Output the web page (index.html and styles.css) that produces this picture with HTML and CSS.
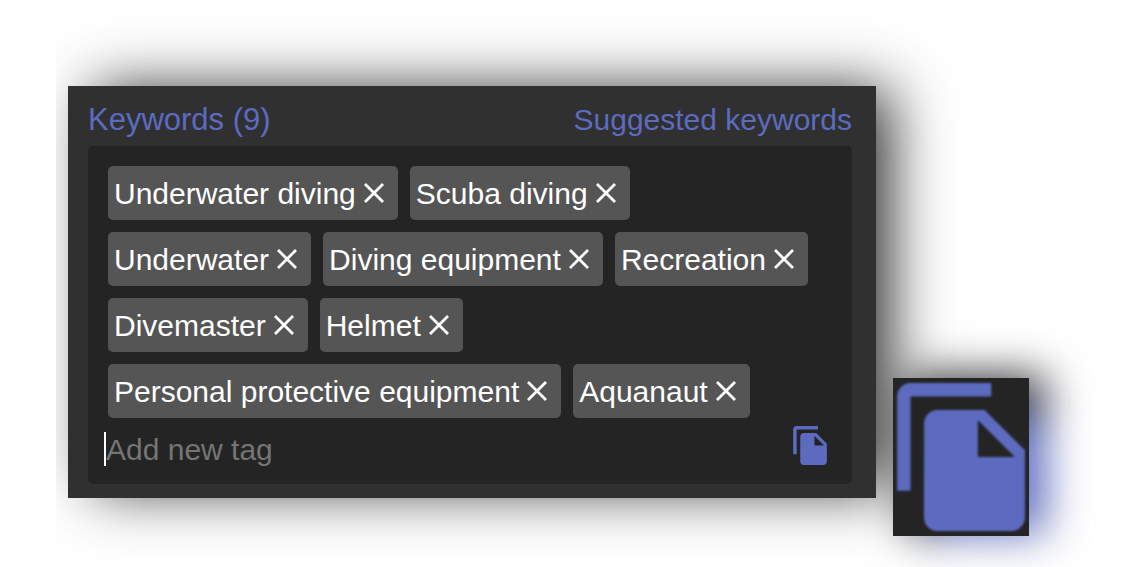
FILE: index.html
```html
<!DOCTYPE html>
<html lang="en">
<head>
<meta charset="utf-8">
<meta name="viewport" content="width=device-width, initial-scale=1">
<title>Keywords</title>
<link rel="stylesheet" href="styles.css">
</head>
<body>
<svg class="defs" aria-hidden="true">
  <symbol id="cross" viewBox="0 0 20 20"><path d="M1 1L19 19M19 1L1 19" fill="none" stroke="currentColor" stroke-width="2.8"/></symbol>
  <symbol id="copy" viewBox="2 1 19 22"><path fill="currentColor" d="M16 1H4c-1.1 0-2 .9-2 2v14h2V3h12V1zm-1 4l6 6v10c0 1.1-.9 2-2 2H7.99C6.89 23 6 22.1 6 21l.01-14c0-1.1.89-2 1.99-2h7zm-1 7h5.5L14 6.5V12z"/></symbol>
</svg>
<main class="stage">
  <section class="panel">
    <header class="panel-header">
      <label class="title" for="new-tag">Keywords (9)</label>
      <a class="suggested" href="#">Suggested keywords</a>
    </header>
    <div class="box">
      <ul class="tags">
        <li class="tag">Underwater diving<button class="remove" type="button" aria-label="Remove Underwater diving"><svg class="cross"><use href="#cross"/></svg></button></li>
        <li class="tag">Scuba diving<button class="remove" type="button" aria-label="Remove Scuba diving"><svg class="cross"><use href="#cross"/></svg></button></li>
        <li class="tag">Underwater<button class="remove" type="button" aria-label="Remove Underwater"><svg class="cross"><use href="#cross"/></svg></button></li>
        <li class="tag">Diving equipment<button class="remove" type="button" aria-label="Remove Diving equipment"><svg class="cross"><use href="#cross"/></svg></button></li>
        <li class="tag">Recreation<button class="remove" type="button" aria-label="Remove Recreation"><svg class="cross"><use href="#cross"/></svg></button></li>
        <li class="tag">Divemaster<button class="remove" type="button" aria-label="Remove Divemaster"><svg class="cross"><use href="#cross"/></svg></button></li>
        <li class="tag">Helmet<button class="remove" type="button" aria-label="Remove Helmet"><svg class="cross"><use href="#cross"/></svg></button></li>
        <li class="tag">Personal protective equipment<button class="remove" type="button" aria-label="Remove Personal protective equipment"><svg class="cross"><use href="#cross"/></svg></button></li>
        <li class="tag">Aquanaut<button class="remove" type="button" aria-label="Remove Aquanaut"><svg class="cross"><use href="#cross"/></svg></button></li>
      </ul>
      <div class="entry">
        <input class="new-tag" id="new-tag" type="text" placeholder="Add new tag">
        <button class="copy" type="button" aria-label="Copy keywords"><svg class="copy-icon"><use href="#copy"/></svg></button>
      </div>
    </div>
  </section>
  <div class="card">
    <svg class="card-icon" role="img" aria-label="Copy"><use href="#copy"/></svg>
  </div>
</main>
</body>
</html>
```

FILE: styles.css
```css
* {
  box-sizing: border-box;
}

body {
  margin: 0;
  background: #fff;
  color: #fff;
  font-family: "Liberation Sans", Arial, sans-serif;
  font-size: 30px;
  line-height: 34px;
}

button {
  padding: 0;
  border: 0;
  background: none;
  color: inherit;
  cursor: pointer;
}

svg {
  display: block;
}

.defs {
  position: absolute;
  width: 0;
  height: 0;
}

.stage {
  display: flex;
  align-items: flex-start;
  gap: 17px;
  padding: 86px 105px 31px 68px;
  overflow: hidden;
  isolation: isolate;
}

.panel {
  flex: 1;
  min-width: 0;
  padding: 17px 24px 14px 20px;
  background: #303030;
  box-shadow: 20px -3px 56px -6px rgba(0, 0, 0, 0.82);
  clip-path: inset(-86px -100px -80px -12px);
}

.panel-header {
  display: flex;
  justify-content: space-between;
  padding-bottom: 9px;
  color: #5c6bc0;
}

.title {
  font-size: 31px;
}

.suggested {
  color: inherit;
  text-decoration: none;
}

.box {
  padding: 20px 20px 18px;
  border-radius: 5px;
  background: #242424;
}

.tags {
  display: flex;
  flex-wrap: wrap;
  gap: 12px;
  margin: 0;
  padding: 0;
  list-style: none;
}

.tag {
  display: flex;
  align-items: center;
  gap: 8px;
  height: 54px;
  padding: 1px 14px 0 6px;
  border-radius: 5px;
  background: #555;
}

.remove {
  padding-bottom: 1px;
}

.cross {
  width: 20px;
  height: 20px;
}

.entry {
  display: flex;
  align-items: flex-end;
  justify-content: space-between;
  margin: 8px 5px 0 -4px;
}

.new-tag {
  flex: 1;
  min-width: 0;
  height: 34px;
  padding: 1px 0 0;
  border: 0;
  border-left: 2px solid #fff;
  outline: 0;
  background: none;
  color: #fff;
  font: inherit;
}

.new-tag::placeholder {
  color: #757575;
  opacity: 1;
}

.copy {
  padding-bottom: 1px;
  color: #5c6bc0;
}

.copy-icon {
  width: 34px;
  height: 39px;
}

.card {
  position: relative;
  margin-top: 292px;
  padding: 5px 4px;
  background: #242424;
  color: #5c6bc0;
}

/* Soft coloured glow cast by the card */
.card::before {
  content: "";
  position: absolute;
  z-index: -1;
  inset: -2px -16px 2px 16px;
  background: linear-gradient(#5c6bc0, #5c6bc0) 95% 98% / 80% 76% no-repeat #242424;
  filter: blur(22px);
}

.card-icon {
  width: 128px;
  height: 148px;
  filter: blur(1px);
}
```
